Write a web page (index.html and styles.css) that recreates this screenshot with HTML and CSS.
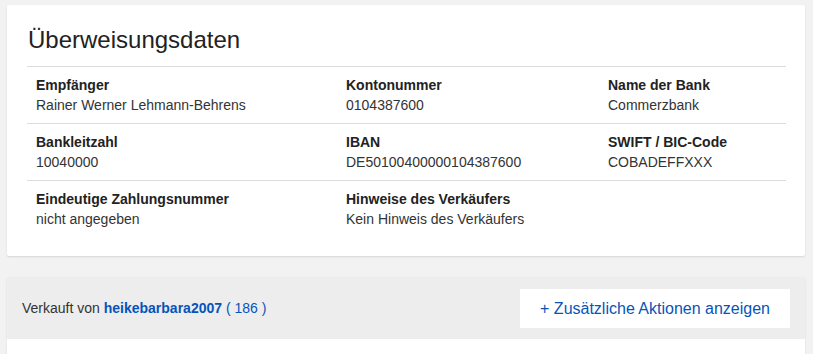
FILE: index.html
```html
<!DOCTYPE html>
<html lang="de">
<head>
    <meta charset="UTF-8">
    <title>Überweisungsdaten</title>
    <link rel="stylesheet" href="styles.css">
</head>
<body>
    <div class="card">
        <h2 class="title">Überweisungsdaten</h2>
        <div class="data">
            <div class="row">
                <div class="cell"><b>Empfänger</b><span>Rainer Werner Lehmann-Behrens</span></div>
                <div class="cell"><b>Kontonummer</b><span>0104387600</span></div>
                <div class="cell"><b>Name der Bank</b><span>Commerzbank</span></div>
            </div>
            <div class="row">
                <div class="cell"><b>Bankleitzahl</b><span>10040000</span></div>
                <div class="cell"><b>IBAN</b><span>DE50100400000104387600</span></div>
                <div class="cell"><b>SWIFT / BIC-Code</b><span>COBADEFFXXX</span></div>
            </div>
            <div class="row">
                <div class="cell"><b>Eindeutige Zahlungsnummer</b><span>nicht angegeben</span></div>
                <div class="cell"><b>Hinweise des Verkäufers</b><span>Kein Hinweis des Verkäufers</span></div>
                <div class="cell"></div>
            </div>
        </div>
    </div>

    <div class="card seller">
        <div class="seller-head">
            <p>Verkauft von <a href="#" class="user">heikebarbara2007</a> <a href="#" class="score">( 186 )</a></p>
            <a href="#" class="more">+ Zusätzliche Aktionen anzeigen</a>
        </div>
        <div class="seller-body"></div>
    </div>
</body>
</html>
```

FILE: styles.css
```css
body,p,h1,h2,h3{ margin: 0;}
a{text-decoration:none;}
body{
    padding: 5px 8px 0 7px;
    background-color: #f2f2f2;
    font-family: "Liberation Sans", Arial, sans-serif;
    font-size: 14px;
    color: #333;
}
.card{
    background-color: #fff;
    box-shadow: 0 1px 2px rgba(0,0,0,.12);
    border-radius: 2px;
}
.card:first-child{
    padding: 21px 19px 27px 20px;
}
.title{
    font-size: 24px;
    font-weight: normal;
    line-height: 28px;
    padding-left: 1px;
    padding-bottom: 12px;
    border-bottom: 1px solid #ddd;
    color: #222;
}
.row{
    display: grid;
    grid-template-columns: 310px 262px 1fr;
    padding: 8px 0 8px 9px;
    border-bottom: 1px solid #ddd;
}
.row:last-child{
    border-bottom: none;
    padding-bottom: 0;
}
.cell b,
.cell span{
    display: block;
    line-height: 20px;
}
.cell b{
    color: #222;
}
.seller{
    margin-top: 21px;
    background-color: #fff;
}
.seller-head{
    display: flex;
    justify-content: space-between;
    align-items: center;
    height: 62px;
    padding: 0 15px;
    background-color: #ededed;
}
.seller-head p{
    color: #333;
}
.user{
    font-weight: bold;
    color: #0654ba;
}
.score{
    color: #0654ba;
}
.more{
    display: block;
    padding: 0 20px;
    height: 39px;
    line-height: 39px;
    background-color: #fff;
    font-size: 16px;
    color: #0654ba;
}
.seller-body{
    height: 20px;
}
```
